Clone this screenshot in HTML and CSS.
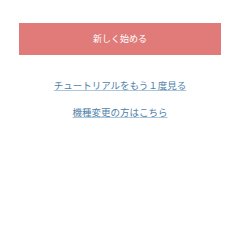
FILE: index.html
```html
<!DOCTYPE html>
<html lang="ja">
<head>
    <meta charset="UTF-8">
    <title>start</title>
    <link rel="stylesheet" href="styles.css">
</head>
<body>
    <div id="start">
        <a class="btn-start" href="#">新しく始める</a>
        <ul class="links">
            <li><a href="#">チュートリアルをもう１度見る</a></li>
            <li><a href="#">機種変更の方はこちら</a></li>
        </ul>
    </div>
</body>
</html>
```
FILE: styles.css
```css
* {
    margin: 0;
    padding: 0;
}
body {
    background-color: #fff;
    font-family: "Noto Sans CJK JP", sans-serif;
}
#start {
    padding: 23px 19px 0;
}
.btn-start {
    display: block;
    height: 32px;
    line-height: 32px;
    text-align: center;
    font-size: 9px;
    color: #fff;
    text-decoration: none;
    background-color: #e07b7a;
}
.links {
    list-style-type: none;
    padding-top: 23px;
}
.links li {
    height: 27px;
    text-align: center;
    font-size: 9.5px;
    line-height: 14px;
}
.links a {
    color: #4f82a9;
    text-decoration: underline;
    text-decoration-color: #a9c8de;
}
```
